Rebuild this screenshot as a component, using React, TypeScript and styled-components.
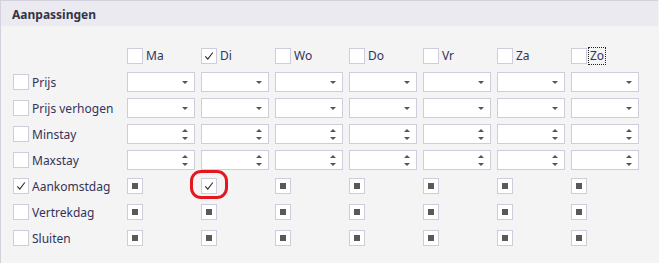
import React from "react";
import styled, { createGlobalStyle } from "styled-components";

const Global = createGlobalStyle`
  html, body { margin: 0; padding: 0; background: #f4f4f4; }
  body { font-family: "Noto Sans", "Open Sans", sans-serif; }
`;

const Panel = styled.div`
  width: 658px;
  height: 263px;
  box-sizing: border-box;
  border-left: 1px solid #d3d2dc;
  border-top: 1px solid #d3d2dc;
  background: #f4f4f4;
  display: flex;
  flex-direction: column;
`;

const Header = styled.div`
  height: 25px;
  background: #ebeaf0;
  display: flex;
  align-items: center;
  padding-left: 11px;
  padding-top: 1px;
  box-sizing: border-box;
  font-size: 12px;
  font-weight: 700;
  color: #34344a;
  flex-shrink: 0;
`;

const Body = styled.div`
  padding: 22px 0 0 12px;
`;

const Grid = styled.div`
  display: grid;
  grid-template-columns: 108px repeat(7, 68px);
  grid-template-rows: 18px repeat(7, 20px);
  column-gap: 6px;
  row-gap: 6px;
`;

const Cell = styled.div<{ $start?: boolean }>`
  position: relative;
  display: flex;
  align-items: ${(p) => (p.$start ? "flex-start" : "center")};
  gap: 3px;
  font-size: 12px;
  color: #33335a;
  white-space: nowrap;
`;

const Box = styled.div`
  width: 16px;
  height: 16px;
  box-sizing: border-box;
  border: 1px solid #cfcddb;
  background: #fff;
  display: flex;
  align-items: center;
  justify-content: center;
  flex-shrink: 0;
`;

const Indeterminate = styled.div`
  width: 6px;
  height: 6px;
  background: #595959;
`;

const DayLabel = styled.span<{ $focus?: boolean }>`
  line-height: 16px;
  padding: 0 1px;
  margin-left: -1px;
  outline: ${(p) => (p.$focus ? "1px dotted #222" : "none")};
  outline-offset: 0px;
`;

const Editor = styled.div`
  width: 68px;
  height: 20px;
  box-sizing: border-box;
  border: 1px solid #cfcddb;
  background: #fff;
  position: relative;
`;

const ArrowSlot = styled.div`
  position: absolute;
  right: 6px;
  top: 0;
  bottom: 0;
  display: flex;
  flex-direction: column;
  align-items: center;
  justify-content: center;
  gap: 5px;
`;

const Ring = styled.div`
  position: absolute;
  left: -11px;
  top: -6px;
  width: 38px;
  height: 29px;
  box-sizing: border-box;
  border: 3px solid #e4161f;
  border-radius: 11px;
  pointer-events: none;
`;

const Check = () => (
  <svg width="12" height="12" viewBox="0 0 12 12">
    <path d="M2.3 6.3 L4.8 9.2 L9.8 2.5" fill="none" stroke="#2b2b2b" strokeWidth="1.1" />
  </svg>
);

const Down = () => (
  <svg width="6" height="3" viewBox="0 0 6 3">
    <path d="M0 0 H6 L3 3 Z" fill="#555" />
  </svg>
);
const Up = () => (
  <svg width="6" height="3" viewBox="0 0 6 3">
    <path d="M0 3 H6 L3 0 Z" fill="#555" />
  </svg>
);

const days = ["Ma", "Di", "Wo", "Do", "Vr", "Za", "Zo"];

type RowKind = "combo" | "spin" | "check";
const rows: { label: string; kind: RowKind; checked?: boolean }[] = [
  { label: "Prijs", kind: "combo" },
  { label: "Prijs verhogen", kind: "combo" },
  { label: "Minstay", kind: "spin" },
  { label: "Maxstay", kind: "spin" },
  { label: "Aankomstdag", kind: "check", checked: true },
  { label: "Vertrekdag", kind: "check" },
  { label: "Sluiten", kind: "check" },
];

export default function App() {
  return (
    <>
      <Global />
      <Panel>
        <Header>Aanpassingen</Header>
        <Body>
          <Grid>
            <Cell $start />
            {days.map((d) => (
              <Cell key={d} $start>
                <Box>{d === "Di" && <Check />}</Box>
                <DayLabel $focus={d === "Zo"}>{d}</DayLabel>
              </Cell>
            ))}
            {rows.map((r) => (
              <React.Fragment key={r.label}>
                <Cell>
                  <Box>{r.checked && <Check />}</Box>
                  <span>{r.label}</span>
                </Cell>
                {days.map((d) => (
                  <Cell key={d}>
                    {r.kind === "combo" && (
                      <Editor>
                        <ArrowSlot>
                          <Down />
                        </ArrowSlot>
                      </Editor>
                    )}
                    {r.kind === "spin" && (
                      <Editor>
                        <ArrowSlot>
                          <Up />
                          <Down />
                        </ArrowSlot>
                      </Editor>
                    )}
                    {r.kind === "check" && (
                      <Box>
                        {r.checked && d === "Di" ? <Check /> : <Indeterminate />}
                      </Box>
                    )}
                    {r.kind === "check" && r.checked && d === "Di" && <Ring />}
                  </Cell>
                ))}
              </React.Fragment>
            ))}
          </Grid>
        </Body>
      </Panel>
    </>
  );
}
